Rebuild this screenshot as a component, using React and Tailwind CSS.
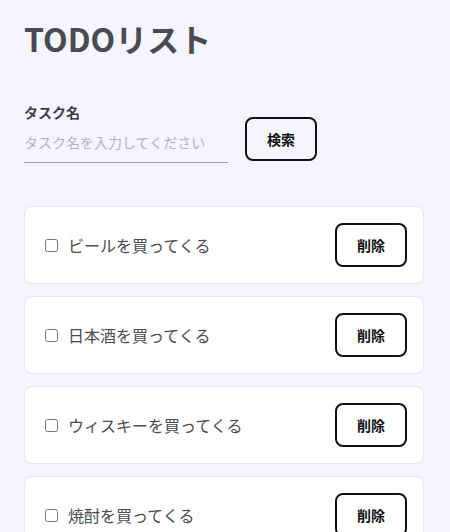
import React from "react";

const items = ["ビールを買ってくる", "日本酒を買ってくる", "ウィスキーを買ってくる", "焼酎を買ってくる"];

export default function App() {
  return (
    <div className="min-h-[532px] w-[450px] overflow-hidden bg-[#f5f5fe] px-6 pt-[14px] font-['Noto_Sans_CJK_JP','Noto_Sans',sans-serif]">
      <h1 className="text-[32px] font-bold leading-[48px] text-[#4a4a52]">TODOリスト</h1>
      <div className="mt-[40px] flex items-end gap-[17px]">
        <div className="flex w-[204px] flex-col">
          <label className="text-[14px] font-semibold leading-[20px] text-[#3f3f46]">タスク名</label>
          <input
            className="mt-[6px] h-[35px] w-full border-0 border-b border-[#a1a1aa] bg-transparent pb-[6px] text-[14px] text-[#3f3f46] outline-none placeholder:text-[#b4b4bc]"
            placeholder="タスク名を入力してください"
          />
        </div>
        <button className="mb-[2px] h-[44px] w-[72px] rounded-[8px] border-2 border-[#111118] bg-transparent text-[14px] font-bold text-[#111]">
          検索
        </button>
      </div>
      <div className="mt-[43px] flex w-[400px] flex-col gap-[12px]">
        {items.map((t) => (
          <div key={t} className="flex items-center justify-between rounded-[8px] border border-[#e6e6ee] bg-white py-4 pl-5 pr-4">
            <label className="flex items-center gap-[10px]">
              <input type="checkbox" className="m-0 h-[13px] w-[13px]" />
              <span className="text-[16px] text-[#4b4b52]">{t}</span>
            </label>
            <button className="h-[44px] w-[72px] rounded-[8px] border-2 border-[#111118] bg-transparent text-[14px] font-bold text-[#111]">
              削除
            </button>
          </div>
        ))}
      </div>
    </div>
  );
}
